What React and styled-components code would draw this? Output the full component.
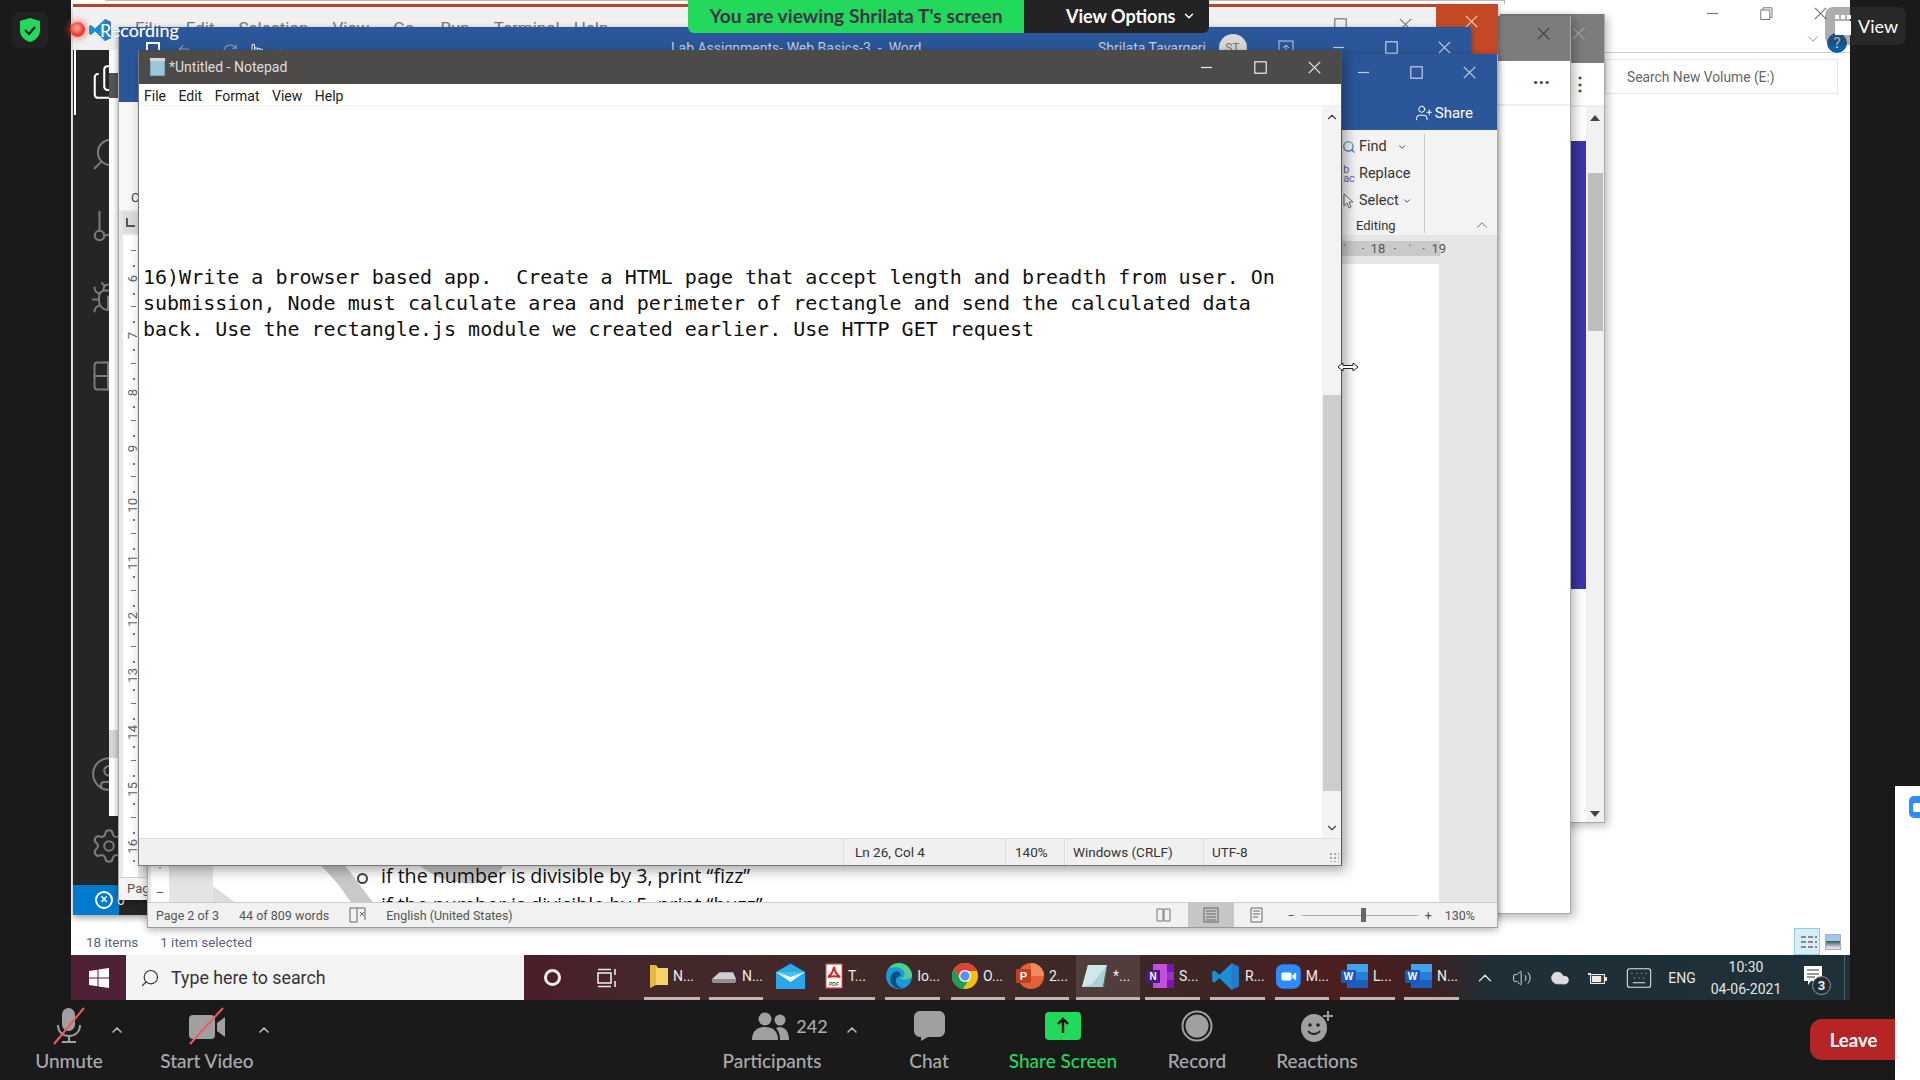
import React from "react";
import styled, { createGlobalStyle } from "styled-components";
import { Files, Search, GitBranch, Bug, Grid2x2, CircleUser, Settings, ChevronUp, ChevronDown, Volume2, Keyboard, Cloud, UserPlus, Undo2, RotateCw, Pointer } from "lucide-react";

const Global = createGlobalStyle`
  html, body { margin: 0; padding: 0; background: #1a1a1a; overflow: hidden; }
  * { box-sizing: border-box; }
`;
const ui = `Roboto, "Liberation Sans", sans-serif`;

const Page = styled.div`
  position: relative; width: 1920px; height: 1080px; display: flex; background: #1a1a1a; overflow: hidden; font-family: ${ui};
`;
const MainColumn = styled.div`width: 1895px; display: flex; flex-direction: column;`;
const RightGutter = styled.div`width: 25px; display: flex; flex-direction: column; justify-content: flex-end;`;
const PeekStrip = styled.div`height: 294px; background: #fff; padding: 10px 0 0 14px;`;
const PeekIcon = styled.div`width: 14px; height: 22px; border-radius: 5px 0 0 5px; background: #2d8cff; display: flex; align-items: center; padding-left: 4px;
  &::after { content: ""; width: 10px; height: 9px; background: #fff; border-radius: 2px; }`;
const Desktop = styled.div`
  position: relative; margin-left: 71px; width: 1779px; height: 1000px; background: #fff; display: flex; flex-direction: column; overflow: hidden;
`;
const TopSliver = styled.div`position: absolute; left: 34px; top: 0; width: 1400px; height: 4px; border-top: 1px solid #bbb; border-right: 1px solid #bbb;`;

/* Explorer (the window at the very back) */
const ExplorerBody = styled.div`flex: 1; display: flex; flex-direction: column; align-items: flex-end;`;
const ExplorerControls = styled.div`height: 26px; display: flex; align-items: center; gap: 41px; padding-right: 23px; color: #777;`;
const ExplorerHelpRow = styled.div`height: 27px; width: 260px; border-bottom: 1px solid #d0d0d0; display: flex; align-items: center; justify-content: flex-end; gap: 5px; padding-right: 3px; color: #888;`;
const HelpDot = styled.div`width: 20px; height: 20px; margin-top: 8px; border-radius: 50%; background: #0d5fa8; color: #fff; font-size: 15px; text-align: center; line-height: 20px;`;
const SearchBox = styled.div`margin: 6px 12px 0 0; width: 233px; height: 35px; border: 1px solid #e6e6e6; display: flex; align-items: center; padding-left: 21px; font-size: 13.8px; color: #666;`;
const ExplorerStatus = styled.div`height: 27px; display: flex; align-items: center; font-size: 13.5px; color: #5a6388; padding-left: 15px; padding-right: 9px;`;
const StatusPart = styled.span`margin-right: 22px;`;
const ViewPick = styled.div`margin-left: auto; width: 26px; height: 27px; background: #d6eef8; border: 1px solid #8fcfe6; display: flex; flex-direction: column; justify-content: center; gap: 3px; padding-left: 6px;
  & > i { display: block; width: 16px; height: 2px; background: repeating-linear-gradient(90deg, #888 0 5px, transparent 5px 7px); }`;
const ThumbPick = styled.div`margin-left: 5px; width: 16px; height: 16px; border: 1px solid #a7a7e8; background: linear-gradient(#9fc8e8 45%, #375f4a 45%, #dde 90%);`;

/* Taskbar */
const Taskbar = styled.div`
  height: 45px; display: flex; position: relative;
  background: linear-gradient(90deg, #4e2136 0, #4e2136 3%, #4b1e2a 26%, #43282a 33%, #3d2a28 55%, #3d2525 64%, #4c1f20 71%, #40201f 76%, #1e2f38 80%, #1f3039 100%);
`;
const StartButton = styled.div`width: 55px; display: flex; align-items: center; justify-content: center;`;
const TaskSearch = styled.div`width: 398px; background: #f3f3f3; display: flex; align-items: center; padding-left: 14px; gap: 11px; font-size: 17.8px; color: #333;`;
const TaskTool = styled.div`width: ${p => p.$w}px; display: flex; align-items: center; justify-content: center;`;
const Cortana = styled.div`width: 17px; height: 17px; border-radius: 50%; border: 3px solid #eee;`;
const AppSlot = styled.div`
  width: ${p => p.$w}px; margin-left: ${p => p.$ml}px; display: flex; align-items: center; gap: 5px; padding-left: ${p => p.$pad}px; color: #eee; font-size: 14px;
  background: ${p => p.$active ? "rgba(255,255,255,.1)" : "transparent"};
  border-bottom: 3px solid ${p => p.$run ? "#c4b4b0" : "transparent"};
`;
const Tray = styled.div`display: flex; margin-left: 11px; color: #e6e6e6;`;
const TrayCell = styled.div`width: ${p => p.$w}px; display: flex; align-items: center; justify-content: center; font-size: 14px; color: #e6e6e6;`;
const Clock = styled.div`width: 84px; font-size: 14px; line-height: 22px; text-align: center; color: #e6e6e6; display: flex; flex-direction: column; justify-content: center;`;
const NoteWrap = styled.div`position: relative; width: 18px; height: 24px; `;
const NoteBadge = styled.div`position: absolute; left: 8px; top: 10px; width: 19px; height: 19px; border-radius: 50%; border: 1px solid #999; background: #222c33; color: #eee; font-size: 13px; font-weight: 700; text-align: center; line-height: 17px;`;
const TrayEdge = styled.div`width: 12px; display: flex; justify-content: center; &::after { content: ""; width: 1px; background: #50606a; }`;

/* Grey windows */
const GreyWindowBack = styled.div`
  position: absolute; left: 1429px; top: 14px; width: 105px; height: 809px; background: #fff; box-shadow: 3px 3px 8px rgba(0,0,0,.25); display: flex; flex-direction: column; border-right: 1px solid #aaa; border-bottom: 1px solid #aaa;
`;
const GreyTitle = styled.div`height: ${p => p.$h}px; background: #7c7c7c; flex: none; display: flex; align-items: flex-start; justify-content: flex-end; padding: ${p => p.$top}px ${p => p.$right}px 0 0; color: ${p => p.$fg};`;
const GreyTools = styled.div`height: ${p => p.$h}px; flex: none; display: flex; align-items: center; justify-content: flex-end; padding: 0 ${p => p.$right}px ${p => p.$bottom || 0}px 0; border-bottom: 2px solid #eee; color: #444; font-weight: 900; font-size: 18px;`;
const BackContent = styled.div`flex: 1; display: flex; justify-content: flex-end;`;
const BluePanel = styled.div`width: 16px; height: 448px; margin-top: 34px; background: linear-gradient(90deg, #33309f, #3d36ad); `;
const BackScroll = styled.div`width: 18px; background: #f1f1f1; display: flex; flex-direction: column; align-items: center; color: #444; font-size: 10px;`;
const BackThumb = styled.div`width: 15px; height: 158px; margin-top: 52px; background: #bdbdbd;`;
const BackArrow = styled.div`margin-top: ${p => p.$mt}px; width: 0; height: 0; border-left: 5px solid transparent; border-right: 5px solid transparent; ${p => p.$up ? "border-bottom: 6px solid #444;" : "border-top: 6px solid #444;"}`;
const GreyWindowFront = styled.div`
  position: absolute; left: 1369px; top: 16px; width: 131px; height: 898px; background: #fff; box-shadow: 3px 3px 10px rgba(0,0,0,.3); display: flex; flex-direction: column; border-right: 1px solid #aaa; border-bottom: 1px solid #aaa;
`;

/* VS Code */
const VsWindow = styled.div`
  position: absolute; z-index: 0; left: 2px; top: 4px; width: 1425px; height: 911px; border-top: 3px solid #b0472e; display: flex; flex-direction: column; background: #f0f0f0; box-shadow: 0 3px 6px rgba(0,0,0,.35);
`;
const VsHead = styled.div`height: 43px; background: #f0f0f0; display: flex; padding-left: 15px; color: #777; font-size: 17px; position: relative; z-index: 3;`;
const VsLogoCell = styled.div`margin-top: 11px;`;
const VsMenu = styled.span`position: relative; margin-left: ${p => p.$ml}px; top: 11px; height: 20px;`;
const VsWinTools = styled.div`margin-left: auto; display: flex; gap: 52px; padding: 11px 86px 0 0; color: #777;`;
const VsClose = styled.div`position: absolute; right: 0; top: -3px; width: 62px; height: 50px; background: #c44a25; color: #f4d6c8; display: flex; align-items: flex-start; justify-content: flex-end; padding: 11px 20px 0 0;`;
const VsBody = styled.div`flex: 1; display: flex; background: #252526; position: relative;`;
const Activity = styled.div`width: 36px; height: 865px; background: #252526; position: relative; color: #858585; flex: none;`;
const ActivityIcon = styled.div`position: absolute; top: ${p => p.$top}px; left: 17px; color: ${p => p.$on ? "#fff" : "#7c7c7c"};`;
const ActiveMark = styled.div`position: absolute; left: 1px; top: 0; width: 2px; height: 65px; background: #fff;`;
const SideStrip = styled.div`width: 9px; height: 766px; background: #fff; flex: none; position: relative; z-index: 1; display: flex; flex-direction: column;`;
const SideSeg = styled.div`flex: none; height: ${p => p.$h}px; background: ${p => p.$c};`;
const VsStatus = styled.div`position: absolute; left: 0; bottom: 0; width: 46px; height: 30px; background: #007acc; color: #fff; font-size: 14px; display: flex; align-items: center; gap: 4px; padding-left: 22px; z-index: 2;`;
const ErrMark = styled.div`width: 18px; height: 18px; border-radius: 50%; border: 2px solid #fff; flex: none; font-size: 14px; line-height: 13px; text-align: center;`;

/* Word behind */
const WordBack = styled.div`
  position: absolute; left: 47px; top: 27px; width: 1353px; height: 873px; background: #fff; display: flex; flex-direction: column; box-shadow: 0 2px 6px rgba(0,0,0,.4); border-left: 1px solid #aaa;
`;
const WordBackTitle = styled.div`height: 75px; background: #2b579a; flex: none;`;
const WordBackRow = styled.div`height: 41px; display: flex; align-items: center; color: #c3cfe3; font-size: 14px; white-space: pre;`;
const QatCell = styled.div`width: 552px; padding: 6px 0 0 27px; display: flex; align-items: center; color: #8fa6c8;`;
const QatSquare = styled.div`width: 14px; height: 14px; border: 2px solid #fff; margin-top: -4px;`;
const QatIcon = styled.div`margin-left: ${p => p.$ml}px; display: flex; color: ${p => p.$c || "#8fa6c8"};`;
const QatDash = styled.div`margin-left: 19px; width: 7px; height: 2px; background: #c8d4e6;`;
const WordBackName = styled.div`margin-left: auto;`;
const ToolCell = styled.div`width: 53px; display: flex; align-items: center; justify-content: center; color: #c3cfe3;`;
const Avatar = styled.div`width: 28px; height: 28px; border-radius: 50%; background: #d9d9d9; color: #777; font-size: 12px; text-align: center; line-height: 28px;`;
const WordBackRibbon = styled.div`height: 108px; flex: none; background: #f8f8f8; color: #444; font-size: 13px; padding: 88px 0 0 12px;`;
const WordBackRuler = styled.div`height: 25px; flex: none; background: #e6e6e6; padding: 2px 0 0 4px;`;
const TabStop = styled.div`width: 15px; height: 21px; background: #dcdcdc; display: flex; align-items: center; justify-content: center; &::after { content: ""; width: 7px; height: 7px; border-left: 2px solid #555; border-bottom: 2px solid #555; }`;
const WordBackDoc = styled.div`flex: 1; background: #e8e8e8; padding-left: 4px; overflow: hidden; min-height: 0;`;
const VRuler = styled.div`width: 15px; height: 100%; background: #fff; padding-top: 15.65px; overflow: hidden;`;
const RulerCell = styled.div`
  position: relative; height: 56.7px; display: flex; align-items: center; justify-content: center; font-size: 13px; color: #666; padding-left: 4px;
  & > span { writing-mode: vertical-rl; transform: rotate(180deg); }
  &::before { content: ""; position: absolute; left: 8px; top: -1px; width: 5px; height: 1px; background: #777; }
  &::after { content: ""; position: absolute; left: 10px; top: 14px; width: 2px; height: 2px; background: #777; box-shadow: 0 28px 0 #777; }
`;
const WordBackStatus = styled.div`height: 23px; flex: none; background: #f4f4f4; border-top: 1px solid #ccc; font-size: 13px; color: #555; padding: 3px 0 0 8px;`;

/* Word in front */
const WordFront = styled.div`
  position: absolute; left: 76px; top: 54px; width: 1351px; height: 874px; background: #f3f3f3; display: flex; flex-direction: column; box-shadow: 0 2px 8px rgba(0,0,0,.3); border-left: 1px solid #aaa; border-right: 1px solid #aaa; border-bottom: 1px solid #999;
`;
const FrontBlue = styled.div`height: 76px; flex: none; background: #2b579a; display: flex; flex-direction: column; align-items: flex-end; color: #fff;`;
const FrontControls = styled.div`display: flex; height: 36px; flex: none; padding-right: 1px; color: #c3d1e6;`;
const ShareRow = styled.div`display: flex; align-items: center; height: 46px; flex: none; gap: 2px; font-size: 15px; padding-right: 24px;`;
const Ribbon = styled.div`height: 105px; flex: none; display: flex; justify-content: flex-end;`;
const RibbonGroup = styled.div`width: 155px; position: relative; display: grid; grid-template-columns: 83px 72px; height: 100%;`;
const EditCol = styled.div`border-right: 1px solid #c8c8c8; margin: 4px 0 4px; display: flex; flex-direction: column; font-size: 14.5px; color: #333;`;
const EditRow = styled.div`height: 27px; display: flex; align-items: center; gap: 3px; &:first-child { margin-top: -1px; }`;
const EditGlyph = styled.div`width: 14px; flex: none; color: #6d5d9f; font-size: 11px; line-height: 9px; display: flex; justify-content: center;`;
const EditLabel = styled.div`font-size: 13px; text-align: left; margin: 4px 0 0 14px;`;
const CollapseCell = styled.div`display: flex; align-items: flex-end; justify-content: flex-end; padding: 0 6px 3px 0; color: #444;`;
const RulerBand = styled.div`height: 25px; flex: none; background: #e6e6e6; display: flex; padding-top: 6px;`;
const RulerGray = styled.div`width: 1292px; height: 15px; background: #c9c9c9; display: flex; justify-content: flex-end; align-items: center; font-size: 13px; color: #555; white-space: nowrap;`;
const RulerMark = styled.span`margin-right: ${p => p.$mr}px;`;
const DocArea = styled.div`flex: 1; display: flex; min-height: 0; background: #e6e6e6;`;
const LeftRuler = styled.div`width: 18px; margin-left: 3px; flex: none; background: #fff; display: flex; flex-direction: column; justify-content: flex-end; align-items: center; color: #555; font-size: 13px; padding-bottom: 2px; gap: 10px;
  & > span { writing-mode: vertical-rl; transform: rotate(180deg); }`;
const DocPage = styled.div`flex: 1; margin-top: 4px; background: #fff; display: flex; flex-direction: column; justify-content: flex-end; min-width: 0;`;
const DocEnd = styled.div`width: 58px; flex: none;`;
const BottomStrip = styled.div`height: 37px; flex: none; position: relative; overflow: hidden; padding-left: 188px;`;
const Swoosh = styled.svg`position: absolute; left: 0; top: 0; width: 100%; height: 100%;`;
const DocLine = styled.div`position: relative; font-family: "Open Sans", sans-serif; font-size: 19.6px; line-height: 26px; color: #111; white-space: nowrap; display: flex; align-items: center; gap: 13px; margin-top: ${p => p.$mt || 0}px; padding-left: ${p => p.$pl || 0}px;`;
const Bullet = styled.i`width: 11px; height: 11px; border-radius: 50%; border: 2px solid #444; flex: none; margin-top: 4px;`;
const WordStatus = styled.div`height: 25px; flex: none; border-top: 1px solid #ccc; background: #f1f1f1; display: flex; align-items: center; font-size: 12.5px; color: #555; padding: 0 22px 0 8px;`;
const WordStatusItem = styled.span`margin-left: ${p => p.$ml || 0}px; display: flex; align-items: center;`;
const StatusRight = styled.div`margin-left: auto; display: flex; align-items: center;`;
const LayoutButton = styled.div`width: ${p => p.$w}px; height: 24px; background: ${p => p.$on ? "#c6c6c6" : "transparent"}; display: flex; align-items: center; justify-content: center; color: #666; margin-left: ${p => p.$ml || 0}px;`;
const ZoomTrack = styled.div`width: 116px; height: 1px; background: #aaa; margin: 0 7px; display: flex; justify-content: center; align-items: center;`;
const ZoomThumb = styled.div`width: 5px; height: 14px; margin-left: 8px; background: #666;`;

/* Notepad */
const Notepad = styled.div`
  position: absolute; left: 67px; top: 50px; width: 1204px; height: 816px; background: #fff; display: flex; flex-direction: column; box-shadow: 4px 4px 12px rgba(0,0,0,.35); border-right: 1px solid #555; border-bottom: 1px solid #777; border-left: 1px solid #777;
`;
const NotepadTitle = styled.div`height: 34px; flex: none; background: #4d4b4a; display: flex; align-items: center; padding-left: 8px; color: #ddd; font-size: 14px; gap: 2px;`;
const NotepadControls = styled.div`margin-left: auto; display: flex; gap: 0; color: #eee;`;
const ControlCell = styled.div`width: 54px; height: 34px; display: flex; align-items: center; justify-content: center;`;
const NotepadMenu = styled.div`height: 22px; flex: none; display: flex; align-items: center; gap: 12.5px; padding: 2px 0 0 5px; font-size: 14px; color: #222; border-bottom: 1px solid #f0f0f0;`;
const NotepadBody = styled.div`flex: 1; display: flex; min-height: 0;`;
const EditorText = styled.pre`flex: 1; margin: 0; padding: 158px 0 0 4px; font-family: "DejaVu Sans Mono", monospace; font-size: 20px; line-height: 26px; color: #111; white-space: pre; letter-spacing: 0;`;
const NpScroll = styled.div`width: 19px; flex: none; background: #f3f3f3; display: flex; flex-direction: column; align-items: center; color: #444;`;
const NpThumb = styled.div`width: 18px; height: 396px; margin-top: 271px; background: #cdcdcd; flex: none;`;
const NpStatus = styled.div`height: 27px; flex: none; background: #f1f0f1; border-top: 1px solid #ddd; display: flex; font-size: 13.5px; color: #333; position: relative;`;
const NpCell = styled.div`width: ${p => p.$w}px; flex: none; margin-left: ${p => p.$ml || 0}px; border-left: 1px solid #ddd; padding-left: ${p => p.$pad}px; display: flex; align-items: center;`;
const Grip = styled.div`position: absolute; right: 2px; bottom: 3px; width: 10px; height: 10px; background: radial-gradient(#aaa 45%, transparent 50%) 0 0 / 4px 4px;`;

/* Overlays */
const ShieldBox = styled.div`position: absolute; left: 12px; top: 12px; width: 36px; height: 36px; background: #222; border-radius: 7px; display: flex; align-items: center; justify-content: center;`;
const RecDot = styled.div`position: absolute; left: 70px; top: 22px; width: 15px; height: 15px; border-radius: 50%; background: radial-gradient(circle at 45% 40%, #ffb5a8, #ee3a35 55%); box-shadow: 0 0 6px 2px rgba(240,70,50,.55);`;
const RecLabel = styled.div`position: absolute; left: 100px; top: 18px; font-family: Lato, sans-serif; font-size: 18px; line-height: 24px; color: #fff; text-shadow: 0 0 1px #7a8aa0;`;
const Banner = styled.div`position: absolute; left: 688px; top: 0; height: 33px; display: flex; border-radius: 0 0 6px 6px; overflow: hidden;`;
const BannerGreen = styled.div`width: 336px; padding-bottom: 2px; background: #23d95c; color: #3a3648; font-family: Lato, sans-serif; font-weight: 700; font-size: 19.3px; display: flex; align-items: center; justify-content: center;`;
const BannerDark = styled.div`width: 185px; padding: 0 0 2px 42px; background: #232325; color: #fff; font-family: Lato, sans-serif; font-weight: 700; font-size: 18px; display: flex; align-items: center; gap: 6px;`;
const ViewButton = styled.div`position: absolute; left: 1825px; top: 7px; width: 81px; height: 38px; border-radius: 8px; background: rgba(60,60,60,.42); display: flex; align-items: center; gap: 7px; padding-left: 10px; color: #fff; font-family: Lato, sans-serif; font-size: 18px;`;
const ResizeCursor = styled.svg`position: absolute; left: 1337px; top: 360px;`;

/* Zoom toolbar */
const Toolbar = styled.div`height: 80px; display: flex; background: #1a1a1a; align-items: flex-start;`;
const ToolButton = styled.div`width: ${p => p.$w}px; flex: none; margin-left: ${p => p.$ml || 0}px; padding: 10px ${p => p.$pr || 0}px 0 0; display: flex; flex-direction: column; align-items: center; color: ${p => p.$c || "#a9abb0"}; font-family: Lato, sans-serif; font-size: 19px; font-weight: 500; white-space: nowrap;`;
const ToolIcon = styled.div`height: 32px; display: flex; align-items: center; justify-content: center; position: relative; gap: 7px; margin-left: ${p => p.$shift || 0}px;`;
const ToolCaret = styled.div`position: absolute; left: calc(50% + ${p => p.$dx}px); top: 9px; color: #b4b4b4;`;
const ToolText = styled.div`margin-top: 8px; line-height: 22px;`;
const Count = styled.span`font-size: 18px; color: #a9abb0;`;
const Leave = styled.div`margin: 19px 0 0 auto; width: 85px; height: 41px; padding-left: 2px; background: #b52525; border-radius: 12px 0 0 12px; color: #fff; font-family: Lato, sans-serif; font-weight: 700; font-size: 18.5px; display: flex; align-items: center; justify-content: center;`;

/* Glyphs */
const Min = ({ c = "currentColor" }) => <svg width="13" height="13" viewBox="0 0 13 13"><path d="M1 6.5h11" stroke={c} strokeWidth="1.2" /></svg>;
const Max = () => <svg width="13" height="13" viewBox="0 0 13 13"><rect x=".8" y=".8" width="11.4" height="11.4" fill="none" stroke="currentColor" strokeWidth="1.2" /></svg>;
const X = () => <svg width="13" height="13" viewBox="0 0 13 13"><path d="M.8.8l11.4 11.4M12.2.8L.8 12.2" stroke="currentColor" strokeWidth="1.2" /></svg>;
const Restore = () => <svg width="13" height="13" viewBox="0 0 13 13" fill="none" stroke="currentColor"><rect x=".8" y="3" width="9" height="9.5" /><path d="M3 3V.8h9v9.5h-2" /></svg>;

const VsLogo = ({ s = 24 }) => <svg width={s} height={s} viewBox="0 0 24 24"><path d="M17 1l6 3v16l-6 3L7 13.5 3 17l-2-1V8l2-1 4 3.5z" fill="#1a8fd8" /><path d="M17 1l6 3v16l-6 3z" fill="#2a78c8" /></svg>;
const WordLogo = () => <svg width="27" height="26" viewBox="0 0 27 26"><rect x="6" y="1" width="21" height="24" fill="#1b5ebe" /><rect x="6" y="1" width="21" height="8" fill="#41a5ee" /><rect x="6" y="9" width="21" height="8" fill="#2b7cd3" /><rect x="0" y="7" width="15" height="13" rx="1" fill="#185abd" /><text x="7.5" y="17" textAnchor="middle" fontSize="10" fontWeight="700" fill="#fff" fontFamily="Liberation Sans">W</text></svg>;

const taskApps = [
  { l: 644, r: 700, label: "N...", pad: 6, icon: <svg width="18" height="25" viewBox="0 0 18 25"><path d="M0 1h6l2 3h10v17H4l-4 3z" fill="#f5d46a" /><path d="M0 1h6v20l-6 3z" fill="#e7b93f" /></svg> },
  { l: 709, r: 763, label: "N...", pad: 2, icon: <svg width="27" height="18" viewBox="0 0 27 18"><path d="M1 12L9 5h14l3 7v2a2 2 0 0 1-2 2H3a2 2 0 0 1-2-2z" fill="#cfcfcf" /><path d="M1 12h25v2a2 2 0 0 1-2 2H3a2 2 0 0 1-2-2z" fill="#8f8f8f" /></svg> },
  { l: 772, r: 810, label: "", pad: 4, norun: true, icon: <svg width="29" height="26" viewBox="0 0 29 26"><path d="M14.500 0L29 9v17H0V9z" fill="#0a6fc2" /><rect y="9" width="29" height="17" fill="#28a8ea" /><path d="M0 9l14.500 9L29 9 14.500 1z" fill="#50d9ff" opacity=".55" /><path d="M0 9l14.500 10L29 9l-14.500 5z" fill="#fff" /></svg> },
  { l: 819, r: 875, label: "T...", pad: 6, icon: <svg width="18" height="26" viewBox="0 0 18 26"><rect x=".7" y=".7" width="16.6" height="24.6" rx="1" fill="#fff" stroke="#a33" strokeWidth="1.4" /><path d="M9 4c-1 5-3 8-6 10 4-1 8-1 12 0-3-2-5-5-6-10z" fill="none" stroke="#d8261c" strokeWidth="2" /><text x="9" y="23" textAnchor="middle" fontSize="5" fontWeight="700" fill="#555" fontFamily="Liberation Sans">PDF</text></svg> },
  { l: 885, r: 940, label: "Io...", pad: 1, icon: <svg width="28" height="28" viewBox="0 0 28 28"><circle cx="14" cy="14" r="14" fill="#1a9ad6" /><path d="M28 14A14 14 0 0 0 2 7c4-4 18-4 18 6 0 2-2 3-5 3 4 3 11 2 13-2z" fill="#4fd18b" /><path d="M12 9c-8 1-10 10-4 16 3 2 7 3 10 2C9 25 8 14 16 14c-1-3-2-5-4-5z" fill="#0c4a88" /></svg> },
  { l: 951, r: 1005, label: "O...", pad: 1, icon: <svg width="26" height="26" viewBox="0 0 26 26"><circle cx="13" cy="13" r="13" fill="#f6c013" /><path d="M13 0a13 13 0 0 0-11 6l6 10 5-8h12A13 13 0 0 0 13 0z" fill="#db4437" /><path d="M2 6a13 13 0 0 0 9 20l6-10-9-0z" fill="#1e9d55" /><circle cx="13" cy="13" r="6" fill="#fff" /><circle cx="13" cy="13" r="4.700" fill="#5c8ff0" /></svg> },
  { l: 1015, r: 1069, label: "2...", pad: 1, icon: <svg width="28" height="26" viewBox="0 0 28 26"><circle cx="15" cy="13" r="13" fill="#e0613a" /><path d="M15 0a13 13 0 0 1 13 13H15z" fill="#f08a5c" /><rect y="6" width="15" height="14" rx="1" fill="#c43e1c" /><text x="7.500" y="17" textAnchor="middle" fontSize="11" fontWeight="700" fill="#fff" fontFamily="Liberation Sans">P</text></svg> },
  { l: 1076, r: 1140, label: "*...", pad: 6, active: true, icon: <svg width="26" height="24" viewBox="0 0 26 24"><path d="M6 1h19l-4 22H0z" fill="#a8d4d8" /><path d="M6 1h19L10 20 0 23z" fill="#d0e8ea" /><path d="M21 23l4-22v3l-3 20z" fill="#667" /></svg> },
  { l: 1145, r: 1200, label: "S...", pad: 1, icon: <svg width="28" height="26" viewBox="0 0 28 26"><rect x="7" y="1" width="21" height="24" fill="#7719aa" /><rect x="7" y="1" width="14" height="24" fill="#c150e0" /><rect x="21" y="9" width="7" height="8" fill="#9a30c4" /><rect y="7" width="14" height="13" fill="#4b1a80" /><text x="7" y="17" textAnchor="middle" fontSize="10" fontWeight="700" fill="#fff" fontFamily="Liberation Sans">N</text></svg> },
  { l: 1210, r: 1265, label: "R...", pad: 1, icon: <VsLogo s={29} /> },
  { l: 1275, r: 1329, label: "M...", pad: 1, icon: <svg width="27" height="27" viewBox="0 0 27 27"><rect width="27" height="27" rx="8" fill="#2d8cff" /><rect x="6" y="9" width="11" height="9" rx="2" fill="#fff" /><path d="M18 12l4-3v9l-4-3z" fill="#fff" /></svg> },
  { l: 1340, r: 1395, label: "L...", pad: 1, icon: <WordLogo /> },
  { l: 1404, r: 1459, label: "N...", pad: 1, icon: <WordLogo /> },
];
const rulerNums = [6, 7, 8, 9, 10, 11, 12, 13, 14, 15, 16];

export default function App() {
  return (
    <Page>
      <Global />
      <MainColumn>
        <Desktop>
          <ExplorerBody>
            <ExplorerControls><Min /><Restore /><X /></ExplorerControls>
            <ExplorerHelpRow><ChevronDown size={18} strokeWidth={1.1} /><HelpDot>?</HelpDot></ExplorerHelpRow>
            <SearchBox>Search New Volume (E:)</SearchBox>
          </ExplorerBody>
          <ExplorerStatus>
            <StatusPart>18 items</StatusPart>
            <StatusPart>1 item selected</StatusPart>
            <ViewPick><i /><i /><i /></ViewPick>
            <ThumbPick />
          </ExplorerStatus>
          <Taskbar>
            <StartButton>
              <svg width="20" height="20" viewBox="0 0 20 20" fill="#fff"><path d="M0 3l8.500-1.200V9.500H0zM9.500 1.600L20 0v9.500H9.500zM0 10.500h8.500v7.700L0 17zM9.500 10.500H20V20L9.500 18.400z" /></svg>
            </StartButton>
            <TaskSearch><Search size={20} strokeWidth={1.4} style={{ transform: "scaleX(-1)" }} />Type here to search</TaskSearch>
            <TaskTool $w={56}><Cortana /></TaskTool>
            <TaskTool $w={54}>
              <svg width="20" height="20" viewBox="0 0 20 20" fill="none" stroke="#e8e8e8" strokeWidth="1.6"><rect x="1" y="5" width="13" height="10" /><path d="M1 1.500h13M1 18.500h13M18 1v6M18 13v6" /></svg>
            </TaskTool>
            {taskApps.map((a, i) => (
              <AppSlot key={i} $w={a.r - a.l} $ml={a.l - (i ? taskApps[i - 1].r : 634)} $pad={a.pad} $run={!a.norun} $active={a.active}>
                {a.icon}{a.label}
              </AppSlot>
            ))}
            <Tray>
              <TrayCell $w={30}><ChevronUp size={22} strokeWidth={1.4} /></TrayCell>
              <TrayCell $w={44}><Volume2 size={20} strokeWidth={1.1} /></TrayCell>
              <TrayCell $w={32}><Cloud size={20} fill="#ddd" strokeWidth={1} /></TrayCell>
              <TrayCell $w={42}>
                <svg width="19" height="14" viewBox="0 0 19 14"><path d="M0 2h3v2H0z" fill="#eee" /><rect x="2.500" y="3.500" width="14" height="9" fill="#444" stroke="#eee" /><rect x="4" y="5" width="9" height="6" fill="#eee" /><rect x="17" y="6" width="2" height="4" fill="#eee" /></svg>
              </TrayCell>
              <TrayCell $w={42}><Keyboard size={28} strokeWidth={.9} /></TrayCell>
              <TrayCell $w={44}>ENG</TrayCell>
              <Clock><div>10:30</div><div>04-06-2021</div></Clock>
              <TrayCell $w={50}>
                <NoteWrap>
                  <svg width="18" height="20" viewBox="0 0 18 20"><path d="M0 0h18v15H7l-3 4v-4H0z" fill="#fff" /><path d="M3 4h12M3 8h12M3 11h8" stroke="#333" strokeWidth="1" /></svg>
                  <NoteBadge>3</NoteBadge>
                </NoteWrap>
              </TrayCell>
              <TrayEdge />
            </Tray>
          </Taskbar>

          <TopSliver />

          <GreyWindowBack>
            <GreyTitle $h={49} $top={13} $right={19} $fg="#a9a9a9"><X /></GreyTitle>
            <GreyTools $h={44} $right={15} $bottom={2}>⋮</GreyTools>
            <BackContent>
              <BluePanel />
              <BackScroll>
                <BackArrow $up $mt={8} />
                <BackThumb />
                <BackArrow $mt={480} />
              </BackScroll>
            </BackContent>
          </GreyWindowBack>
          <GreyWindowFront>
            <GreyTitle $h={45} $top={11} $right={20} $fg="#3f3f3f"><X /></GreyTitle>
            <GreyTools $h={45} $right={20}>···</GreyTools>
          </GreyWindowFront>

          <VsWindow>
            <VsHead>
              <VsLogoCell><VsLogo /></VsLogoCell>
              <VsMenu $ml={23}>File</VsMenu>
              <VsMenu $ml={24}>Edit</VsMenu>
              <VsMenu $ml={24}>Selection</VsMenu>
              <VsMenu $ml={24}>View</VsMenu>
              <VsMenu $ml={24}>Go</VsMenu>
              <VsMenu $ml={26}>Run</VsMenu>
              <VsMenu $ml={24}>Terminal</VsMenu>
              <VsMenu $ml={14}>Help</VsMenu>
              <VsWinTools><Max /><X /></VsWinTools>
              <VsClose><X /></VsClose>
            </VsHead>
            <VsBody>
              <Activity>
                <ActiveMark />
                <ActivityIcon $on $top={13}><Files size={38} strokeWidth={1.3} /></ActivityIcon>
                <ActivityIcon $top={85}><Search size={38} strokeWidth={1.3} style={{ transform: "scaleX(-1)" }} /></ActivityIcon>
                <ActivityIcon $top={157}><GitBranch size={38} strokeWidth={1.3} /></ActivityIcon>
                <ActivityIcon $top={230}><Bug size={36} strokeWidth={1.3} /></ActivityIcon>
                <ActivityIcon $top={308}><Grid2x2 size={36} strokeWidth={1.3} /></ActivityIcon>
                <ActivityIcon $top={705}><CircleUser size={38} strokeWidth={1.3} /></ActivityIcon>
                <ActivityIcon $top={777}><Settings size={38} strokeWidth={1.3} /></ActivityIcon>
              </Activity>
              <SideStrip>
                <SideSeg $h={23} $c="#fff" />
                <SideSeg $h={25} $c="#555" />
                <SideSeg $h={632} $c="#fff" />
                <SideSeg $h={28} $c="#d8d8d8" />
                <SideSeg $h={58} $c="#fff" />
              </SideStrip>
              <VsStatus><ErrMark>×</ErrMark>0</VsStatus>
            </VsBody>
          </VsWindow>

          <WordBack>
            <WordBackTitle>
              <WordBackRow>
                <QatCell>
                  <QatSquare />
                  <QatIcon $ml={17}><Undo2 size={16} strokeWidth={1.6} /></QatIcon>
                  <QatIcon $ml={29}><RotateCw size={16} strokeWidth={1.6} /></QatIcon>
                  <QatIcon $ml={10} $c="#f0f4fa"><Pointer size={16} strokeWidth={1.6} /></QatIcon>
                  <QatIcon $ml={8}><ChevronDown size={12} strokeWidth={1.6} /></QatIcon>
                  <QatDash />
                </QatCell>
                <span>Lab Assignments- Web Basics-3  -  Word</span>
                <WordBackName>Shrilata Tavargeri</WordBackName>
                <ToolCell><Avatar>ST</Avatar></ToolCell>
                <ToolCell><svg width="16" height="16" viewBox="0 0 16 16" fill="none" stroke="currentColor"><rect x="1" y="1" width="14" height="14" /><path d="M8 12V5M5 8l3-3 3 3" /></svg></ToolCell>
                <ToolCell><Min /></ToolCell>
                <ToolCell><Max /></ToolCell>
                <ToolCell><X /></ToolCell>
              </WordBackRow>
            </WordBackTitle>
            <WordBackRibbon>C</WordBackRibbon>
            <WordBackRuler><TabStop /></WordBackRuler>
            <WordBackDoc>
              <VRuler>
                {rulerNums.map(n => <RulerCell key={n}><span>{n}</span></RulerCell>)}
              </VRuler>
            </WordBackDoc>
            <WordBackStatus>Page 2 of 3</WordBackStatus>
          </WordBack>

          <WordFront>
            <FrontBlue>
              <FrontControls>
                <ToolCell><Min /></ToolCell>
                <ToolCell><Max /></ToolCell>
                <ToolCell><X /></ToolCell>
              </FrontControls>
              <ShareRow><UserPlus size={18} strokeWidth={1.3} />Share</ShareRow>
            </FrontBlue>
            <Ribbon>
              <RibbonGroup>
                <EditCol>
                  <EditRow><EditGlyph><Search size={14} color="#3a7ab8" strokeWidth={2} /></EditGlyph>Find<ChevronDown size={10} style={{ marginLeft: 7 }} /></EditRow>
                  <EditRow><EditGlyph>b<br />ac</EditGlyph>Replace</EditRow>
                  <EditRow><EditGlyph><svg width="12" height="16" viewBox="0 0 12 16" fill="#fff" stroke="#666"><path d="M1 1v12l3-3 2 5 2-1-2-5h4z" /></svg></EditGlyph>Select<ChevronDown size={10} /></EditRow>
                  <EditLabel>Editing</EditLabel>
                </EditCol>
                <CollapseCell><ChevronUp size={18} strokeWidth={1} /></CollapseCell>
              </RibbonGroup>
            </Ribbon>
            <RulerBand>
              <RulerGray>
                <RulerMark $mr={14}>ˈ</RulerMark>
                <RulerMark $mr={6}>·</RulerMark>
                <RulerMark $mr={8}>18</RulerMark>
                <RulerMark $mr={11}>·</RulerMark>
                <RulerMark $mr={10}>ˈ</RulerMark>
                <RulerMark $mr={6}>·</RulerMark>
                <RulerMark $mr={-6}>19</RulerMark>
              </RulerGray>
            </RulerBand>
            <DocArea>
              <LeftRuler><span>20</span><div>·</div><div>–</div></LeftRuler>
              <DocPage>
                <BottomStrip>
                  <Swoosh viewBox="0 0 1272 37" preserveAspectRatio="none">
                    <path d="M0 0h44v37H0z" fill="#e4e4e4" />
                    <path d="M44 21L66 37H44z" fill="#ddd" />
                    <path d="M151 0h25c8 10 18 24 28 37h-22c-8-12-18-26-31-37z" fill="#c9c9c9" />
                    <path d="M251 0h84c-6 14-26 21-42 18-18-2-34-10-42-18z" fill="#c9c9c9" />
                  </Swoosh>
                  <DocLine $mt={-2}><Bullet />if the number is divisible by 3, print “fizz”</DocLine>
                  <DocLine $mt={3} $pl={24}>if the number is divisible by 5, print “buzz”</DocLine>
                </BottomStrip>
              </DocPage>
              <DocEnd />
            </DocArea>
            <WordStatus>
              <WordStatusItem>Page 2 of 3</WordStatusItem>
              <WordStatusItem $ml={20}>44 of 809 words</WordStatusItem>
              <WordStatusItem $ml={20}><svg width="17" height="16" viewBox="0 0 17 16" fill="none" stroke="#666"><path d="M1 1h7v14H1zM8 1h8v12" /><path d="M11 5l4 4M15 5l-4 4" /></svg></WordStatusItem>
              <WordStatusItem $ml={20}>English (United States)</WordStatusItem>
              <StatusRight>
                <LayoutButton $w={30}><svg width="15" height="14" viewBox="0 0 15 14" fill="none" stroke="#777"><path d="M1 1h6v12H1zM8 1h6v12H8z" /></svg></LayoutButton>
                <LayoutButton $w={46} $on $ml={9}><svg width="16" height="16" viewBox="0 0 16 16" fill="none" stroke="#666"><rect x="1" y="1" width="14" height="14" /><path d="M3 4h10M3 7h10M3 10h10M3 13h10" /></svg></LayoutButton>
                <LayoutButton $w={46}><svg width="16" height="16" viewBox="0 0 16 16" fill="none" stroke="#666"><path d="M2 1h11v14H2z" /><path d="M4 4h7M4 7h7M4 10h5" /></svg></LayoutButton>
                <WordStatusItem $ml={8}>−</WordStatusItem>
                <ZoomTrack><ZoomThumb /></ZoomTrack>
                <WordStatusItem>+</WordStatusItem>
                <WordStatusItem $ml={13}>130%</WordStatusItem>
              </StatusRight>
            </WordStatus>
          </WordFront>

          <Notepad>
            <NotepadTitle>
              <svg width="20" height="20" viewBox="0 0 20 20"><rect x="3" y="1" width="15" height="18" fill="#9cc7d8" stroke="#557" strokeWidth=".6" /><path d="M3 1h15v3H3z" fill="#d8d8d8" /></svg>
              *Untitled - Notepad
              <NotepadControls>
                <ControlCell><Min /></ControlCell>
                <ControlCell><Max /></ControlCell>
                <ControlCell><X /></ControlCell>
              </NotepadControls>
            </NotepadTitle>
            <NotepadMenu><span>File</span><span>Edit</span><span>Format</span><span>View</span><span>Help</span></NotepadMenu>
            <NotepadBody>
              <EditorText>{`16)Write a browser based app.  Create a HTML page that accept length and breadth from user. On
submission, Node must calculate area and perimeter of rectangle and send the calculated data
back. Use the rectangle.js module we created earlier. Use HTTP GET request`}</EditorText>
              <NpScroll>
                <ChevronUp size={14} style={{ marginTop: 4, flex: "none" }} />
                <NpThumb />
                <ChevronDown size={14} style={{ marginTop: 30, flex: "none" }} />
              </NpScroll>
            </NotepadBody>
            <NpStatus>
              <NpCell $w={162} $ml={704} $pad={11}>Ln 26, Col 4</NpCell>
              <NpCell $w={59} $pad={9}>140%</NpCell>
              <NpCell $w={139} $pad={8}>Windows (CRLF)</NpCell>
              <NpCell $w={140} $pad={8}>UTF-8</NpCell>
              <Grip />
            </NpStatus>
          </Notepad>
        </Desktop>

        <Toolbar>
          <ToolButton $w={138}>
            <ToolIcon>
              <svg width="36" height="38" viewBox="0 0 36 38"><rect x="11" y="1" width="13" height="23" rx="6.500" fill="#a0a0a0" /><path d="M7 18c0 7 5 11 11 11s11-4 11-11M18 29v6M11 35h14" fill="none" stroke="#a0a0a0" strokeWidth="2" /><path d="M3 37L33 1" stroke="#f2595a" strokeWidth="2" /></svg>
              <ToolCaret $dx={40}><ChevronUp size={16} strokeWidth={2.5} /></ToolCaret>
            </ToolIcon>
            <ToolText>Unmute</ToolText>
          </ToolButton>
          <ToolButton $w={138}>
            <ToolIcon>
              <svg width="38" height="38" viewBox="0 0 38 38"><rect x="1" y="8" width="26" height="24" rx="4" fill="#a0a0a0" /><path d="M29 16l8-6v20l-8-6z" fill="#a0a0a0" /><path d="M2 37L35 1" stroke="#f2595a" strokeWidth="2" /></svg>
              <ToolCaret $dx={49}><ChevronUp size={16} strokeWidth={2.5} /></ToolCaret>
            </ToolIcon>
            <ToolText>Start Video</ToolText>
          </ToolButton>
          <ToolButton $w={150} $ml={431} $pr={20}>
            <ToolIcon $shift={36}>
              <svg width="37" height="28" viewBox="0 0 37 28" fill="#a0a0a0"><circle cx="13" cy="7" r="6.500" /><path d="M0 28c0-9 5-13 13-13s13 4 13 13z" /><circle cx="28" cy="8" r="5.500" /><path d="M27 15c6 0 10 4 10 13h-9c0-5-1-9-4-12z" /></svg>
              <Count>242</Count>
              <ToolCaret $dx={54}><ChevronUp size={16} strokeWidth={2.5} /></ToolCaret>
            </ToolIcon>
            <ToolText>Participants</ToolText>
          </ToolButton>
          <ToolButton $w={124} $ml={10}>
            <ToolIcon><svg width="31" height="30" viewBox="0 0 31 30"><path d="M6 0h19a6 6 0 0 1 6 6v14a6 6 0 0 1-6 6H14l-7 4v-4H6a6 6 0 0 1-6-6V6a6 6 0 0 1 6-6z" fill="#a0a0a0" /></svg></ToolIcon>
            <ToolText>Chat</ToolText>
          </ToolButton>
          <ToolButton $w={124} $ml={10} $c="#23d959">
            <ToolIcon><svg width="36" height="28" viewBox="0 0 36 28"><rect width="36" height="28" rx="4" fill="#23d95c" /><path d="M18 21V8M13 12l5-5 5 5" fill="none" stroke="#111" strokeWidth="2.400" /></svg></ToolIcon>
            <ToolText>Share Screen</ToolText>
          </ToolButton>
          <ToolButton $w={124} $ml={10}>
            <ToolIcon><svg width="32" height="32" viewBox="0 0 32 32"><circle cx="16" cy="16" r="14.500" fill="none" stroke="#a0a0a0" strokeWidth="2" /><circle cx="16" cy="16" r="11.500" fill="#a0a0a0" /></svg></ToolIcon>
            <ToolText>Record</ToolText>
          </ToolButton>
          <ToolButton $w={96} $ml={10}>
            <ToolIcon><svg width="34" height="32" viewBox="0 0 34 32"><ellipse cx="14" cy="18" rx="13" ry="14" fill="#a0a0a0" /><circle cx="10" cy="15" r="1.800" fill="#222" /><circle cx="18" cy="15" r="1.800" fill="#222" /><path d="M8 21c3 4 9 4 12 0" fill="none" stroke="#222" strokeWidth="1.800" /><path d="M28 1v10M23 6h10" stroke="#a0a0a0" strokeWidth="2" /></svg></ToolIcon>
            <ToolText>Reactions</ToolText>
          </ToolButton>
          <Leave>Leave</Leave>
        </Toolbar>
      </MainColumn>
      <RightGutter>
        <PeekStrip><PeekIcon /></PeekStrip>
      </RightGutter>

      <ShieldBox>
        <svg width="20" height="24" viewBox="0 0 20 24"><path d="M10 0l10 3v9c0 6-4 10-10 12C4 22 0 18 0 12V3z" fill="#23d95c" /><path d="M5 12l4 4 6-7" fill="none" stroke="#111" strokeWidth="2" /></svg>
      </ShieldBox>
      <RecDot />
      <RecLabel>Recording</RecLabel>
      <Banner>
        <BannerGreen>You are viewing Shrilata T's screen</BannerGreen>
        <BannerDark>View Options<ChevronDown size={14} strokeWidth={2.5} /></BannerDark>
      </Banner>
      <ViewButton>
        <svg width="16" height="22" viewBox="0 0 16 22" fill="#fff"><rect x="0" y="0" width="4" height="4" /><rect x="6" y="0" width="4" height="4" /><rect x="12" y="0" width="4" height="4" /><rect x="0" y="6" width="16" height="14" /></svg>
        View
      </ViewButton>
      <ResizeCursor width="22" height="14" viewBox="0 0 22 14"><path d="M1 7l5-4v2.500h10V3l5 4-5 4V8.500H6V11z" fill="#fff" stroke="#222" /></ResizeCursor>
    </Page>
  );
}
